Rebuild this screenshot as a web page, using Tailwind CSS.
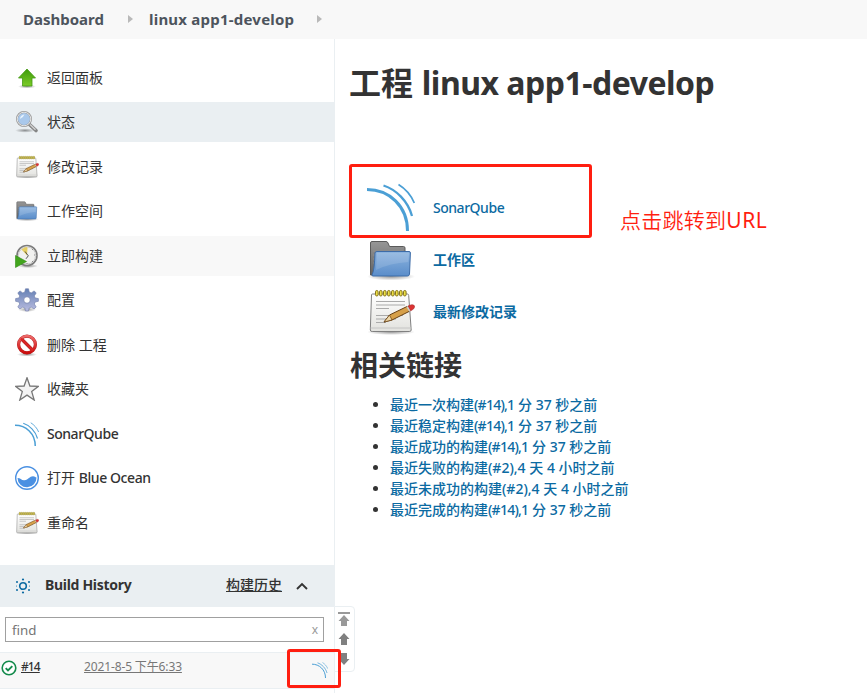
<!DOCTYPE html>
<html lang="zh-CN">
<head>
<meta charset="utf-8">
<title>linux app1-develop [Jenkins]</title>
<script src="https://cdn.jsdelivr.net/npm/@tailwindcss/browser@4"></script>
</head>
<body class="relative h-[693px] w-[867px] overflow-hidden bg-white font-['Noto_Sans','Noto_Sans_CJK_SC',sans-serif] text-sm text-[#333]">
<svg class="absolute size-0" aria-hidden="true">
  <defs>
    <linearGradient id="blue" x1="0" y1="0" x2="0" y2="1"><stop offset="0" stop-color="#8db4df"/><stop offset="1" stop-color="#5a8dca"/></linearGradient>
    <linearGradient id="gray" x1="0" y1="0" x2="0" y2="1"><stop offset="0" stop-color="#969696"/><stop offset="1" stop-color="#626262"/></linearGradient>
    <linearGradient id="paper" x1="0" y1="0" x2="0" y2="1"><stop offset="0" stop-color="#fff"/><stop offset="1" stop-color="#e2e2de"/></linearGradient>
    <linearGradient id="green" x1="0" y1="0" x2="0" y2="1"><stop offset="0" stop-color="#3c9a0a"/><stop offset="1" stop-color="#7ccb28"/></linearGradient>
    <linearGradient id="red" x1="0" y1="0" x2="0" y2="1"><stop offset="0" stop-color="#ee6a6a"/><stop offset="1" stop-color="#cc0c0c"/></linearGradient>
    <linearGradient id="gearfill" x1="0" y1="0" x2="0" y2="1"><stop offset="0" stop-color="#6480b4"/><stop offset="1" stop-color="#babce0"/></linearGradient>
    <radialGradient id="shade"><stop offset="0" stop-color="#000" stop-opacity=".4"/><stop offset="1" stop-color="#000" stop-opacity="0"/></radialGradient>
    <symbol id="sonar" viewBox="0 0 48 48">
      <g fill="none" stroke="#4b9fd5"><path d="M0 6.500C22 6.500 40.500 23 40.500 48" stroke-width="3"/><path d="M16.500 2.500C29 6.500 41 18 45 33" stroke-width="2.300"/><path d="M31.500 1.500C38 5.500 44 12 47.300 20" stroke-width="1.700"/></g>
    </symbol>
    <symbol id="folder" viewBox="0 0 48 48">
      <ellipse cx="24" cy="40.500" rx="24" ry="4" fill="url(#shade)"/>
      <path d="M3.500 39V7q0-1.500 1.500-1.500h14q1.500 0 2 1.500l1.500 3.500h14q1.500 0 1.500 1.500V39z" fill="url(#gray)" stroke="#5a5a5a"/>
      <path d="M6 15h30M6 19h30M6 23h30M6 27h30" stroke="#999" stroke-width=".6"/>
      <path d="M10 15.500h32q1.500 0 1.400 1.500L42.500 38q-.2 2-2 2H6q-1.500 0-.8-1.500Q7.500 34 8 17q0-1.500 2-1.500z" fill="url(#blue)" stroke="#3d6ca8"/>
      <path d="M10 17h32l-.7 9Q23 27 9 34z" fill="#fff" opacity=".13"/>
    </symbol>
    <symbol id="notepad" viewBox="0 0 48 48">
      <ellipse cx="24" cy="44" rx="24" ry="3" fill="url(#shade)"/>
      <path d="M5.500 6h35q1 0 1.200 1.500l2.500 34.500q0 1.500-2 1.500h-37q-2 0-1.900-1.500L4.500 7q0-1 1-1z" fill="url(#paper)" stroke="#808080"/>
      <path d="M3.500 40h41" stroke="#c4c4c4"/>
      <g stroke="#aaa" stroke-width="1.200"><path d="M9 13.500h29M9 17h29M9 20.500h13M9 27.500h27M9 31h20M9 34.500h10"/></g>
      <g fill="#eddf45" stroke="#85751d" stroke-width="1"><rect x="8.500" y="2.500" width="2.600" height="5.500" rx="1.300"/><rect x="12.500" y="2.500" width="2.600" height="5.500" rx="1.300"/><rect x="16.500" y="2.500" width="2.600" height="5.500" rx="1.300"/><rect x="20.500" y="2.500" width="2.600" height="5.500" rx="1.300"/><rect x="24.500" y="2.500" width="2.600" height="5.500" rx="1.300"/><rect x="28.500" y="2.500" width="2.600" height="5.500" rx="1.300"/><rect x="32.500" y="2.500" width="2.600" height="5.500" rx="1.300"/><rect x="36.500" y="2.500" width="2.600" height="5.500" rx="1.300"/></g>
      <path d="M17 34l5.500-7L40 18.500q2-.5 3 1.500t-1 3.500L25 32z" fill="#d6a04a" stroke="#674014"/>
      <path d="M17 34l5.500-7 2.500 5z" fill="#eed7a7" stroke="#674014" stroke-width=".7"/>
      <path d="M41 18l1.500-.7q3-1.300 4.500 0t-.5 3.700L43.500 23z" fill="#dc3333" stroke="#a63030" stroke-width=".6"/>
      <path d="M40 18.500l2.800 4.700" stroke="#ccc" stroke-width="1.500"/>
    </symbol>
  </defs>
</svg>

<header class="flex h-[39px] items-center bg-[#f8f8f8] pb-px text-[15px] leading-5 font-bold text-[#4d545d]">
  <a class="w-[104px] pl-[23px] whitespace-nowrap">Dashboard</a>
  <svg class="mr-[16px] ml-[24px] h-[8px] w-[5px]" viewBox="0 0 5 8"><path d="M0 0l5 4-5 4z" fill="#b9b9b9"/></svg>
  <a class="w-[146px] tracking-[0.22px] whitespace-nowrap">linux app1-develop</a>
  <svg class="ml-[22px] h-[8px] w-[5px]" viewBox="0 0 5 8"><path d="M0 0l5 4-5 4z" fill="#b9b9b9"/></svg>
</header>

<div class="flex h-[654px]">
  <aside class="w-[335px] shrink-0 border-r border-[#eaeff2]">
    <nav class="flex h-[526px] flex-col gap-[4.5px] pt-[18.5px] leading-5">
      <a class="flex h-10 shrink-0 items-center gap-2 pl-[15px]">
        <svg class="size-6" viewBox="0 0 24 24"><ellipse cx="12" cy="20.500" rx="9" ry="2" fill="url(#shade)"/><path d="M12 3l8.500 9H17v8H7.500v-8H3.500z" fill="url(#green)" stroke="#459b14" stroke-width=".8"/></svg>
        <span>返回面板</span>
      </a>
      <a class="flex h-10 shrink-0 items-center gap-2 bg-[#eaeff2] pl-[15px]">
        <svg class="size-6" viewBox="0 0 24 24"><ellipse cx="10" cy="20.500" rx="10" ry="2.200" fill="url(#shade)"/><path d="M14.500 14.500l6.500 6" stroke="#858585" stroke-width="3.600" stroke-linecap="round"/><path d="M15 14.500l5.500 5.200" stroke="#d0d0d0" stroke-width="1.500"/><circle cx="9" cy="9" r="7" fill="#a9c8eb" stroke="#979797" stroke-width="2"/><circle cx="9" cy="9" r="6.800" fill="none" stroke="#eee" stroke-width=".9"/><path d="M5 9q0-4 4.500-4.500Q8 8 5 9z" fill="#e6f1fc"/></svg>
        <span>状态</span>
      </a>
      <a class="flex h-10 shrink-0 items-center gap-2 pl-[15px]"><svg class="size-6"><use href="#notepad"/></svg><span>修改记录</span></a>
      <a class="flex h-10 shrink-0 items-center gap-2 pl-[15px]"><svg class="size-6"><use href="#folder"/></svg><span>工作空间</span></a>
      <a class="flex h-10 shrink-0 items-center gap-2 bg-[#f8f8f8] pl-[15px]">
        <svg class="size-6" viewBox="0 0 24 24"><ellipse cx="13" cy="22" rx="10" ry="2" fill="url(#shade)"/><circle cx="12" cy="11.500" r="10" fill="#f1f1ef" stroke="#7c7c7c" stroke-width="1.600"/><circle cx="12" cy="11.500" r="8.600" fill="none" stroke="#c9c9c9"/><path d="M12 11.500L6.500 5.500q5-3.500 6-2z" fill="#e6cf62"/><path d="M10 7.500l3.300 4.300-2.300 3" fill="none" stroke="#444" stroke-width=".9"/><path d="M17 5l1 1M19 11h1M17 17l1 1M12 19v1" stroke="#888"/><path d="M.5 11.500l11 6-11 6z" fill="#42a51d" stroke="#2f8b12" stroke-width=".6"/></svg>
        <span>立即构建</span>
      </a>
      <a class="flex h-10 shrink-0 items-center gap-2 pl-[15px]">
        <svg class="size-6" viewBox="0 0 24 24"><ellipse cx="12" cy="21.500" rx="9" ry="2.500" fill="url(#shade)"/><path d="M10.500.8h3l.7 3.200 2 .9 3-2 2 2.100-1.900 2.900.8 2 3.300.7v2.700l-3.300.7-.8 2 1.900 2.900-2.100 2.100-2.900-1.900-2 .9-.7 3h-3l-.7-3-2-.9-3 1.900-2-2.100 1.900-2.900-.8-2-3.300-.7v-2.700l3.300-.7.8-2-1.900-2.900 2.100-2.100 2.900 2 2-.9z" fill="url(#gearfill)" stroke="#6c7aa8" stroke-width=".6"/><circle cx="12" cy="12" r="3.300" fill="#fff" stroke="#7480ac" stroke-width=".8"/></svg>
        <span>配置</span>
      </a>
      <a class="flex h-10 shrink-0 items-center gap-2 pl-[15px]">
        <svg class="size-6" viewBox="0 0 24 24"><ellipse cx="12" cy="21.500" rx="10" ry="2" fill="url(#shade)"/><circle cx="12" cy="11.500" r="8.400" fill="#fff" stroke="#b32323" stroke-width="3.200"/><path d="M6.500 6l11 11" stroke="#b32323" stroke-width="3.200"/><circle cx="12" cy="11.500" r="8.400" fill="none" stroke="url(#red)" stroke-width="2.500"/><path d="M6 5.500l12 12" stroke="#d92525" stroke-width="2.300"/></svg>
        <span>删除 工程</span>
      </a>
      <a class="flex h-10 shrink-0 items-center gap-2 pl-[15px]">
        <svg class="size-6" viewBox="0 0 24 24"><path d="M12 .8l2.900 8.200 8.500.3-6.700 5.300 2.500 8.400-7.200-4.900L4.800 23l2.500-8.400L.6 9.300 9.100 9z" fill="#f3f3f3" stroke="#777" stroke-width="1.300"/></svg>
        <span>收藏夹</span>
      </a>
      <a class="flex h-10 shrink-0 items-center gap-2 pl-[15px]"><svg class="size-6"><use href="#sonar"/></svg><span class="font-medium tracking-[-0.47px]">SonarQube</span></a>
      <a class="flex h-10 shrink-0 items-center gap-2 pl-[15px]">
        <svg class="size-6" viewBox="0 0 24 24"><circle cx="12" cy="12" r="11.300" fill="#fff" stroke="#4a90e2" stroke-width="1.400"/><path d="M2.500 12c3 0 4 2.500 7 2.200 4-.4 5-4 8.500-4 1.600 0 2.300.8 3.500 1.300a9.500 9.500 0 0 1-19 .5z" fill="#4a90e2"/></svg>
        <span>打开 <span class="font-medium tracking-[-0.4px]">Blue Ocean</span></span>
      </a>
      <a class="flex h-10 shrink-0 items-center gap-2 pl-[15px]"><svg class="size-6"><use href="#notepad"/></svg><span>重命名</span></a>
    </nav>

    <section>
      <div class="flex h-[42px] items-center bg-[#eaeff2] pl-[15px] font-semibold">
        <svg class="h-4 w-4" viewBox="0 0 16 16"><circle cx="8" cy="8" r="3.300" fill="none" stroke="#0b6aa2" stroke-width="1.600"/><g fill="#0b6aa2"><circle cx="8" cy="1.500" r="1.100"/><circle cx="8" cy="14.500" r="1.100"/><circle cx="2" cy="4" r="1"/><circle cx="14" cy="4" r="1"/><circle cx="2" cy="12" r="1"/><circle cx="14" cy="12" r="1"/><circle cx="1.500" cy="8" r=".5"/><circle cx="14.500" cy="8" r=".5"/></g></svg>
        <span class="ml-[14px] w-[181px] pb-[2px] font-bold tracking-[-0.3px]">Build History</span>
        <a class="pb-[2px] font-medium underline">构建历史</a>
        <svg class="ml-[14px] h-[8px] w-[12px]" viewBox="0 0 12 8"><path d="M1 7l5-5 5 5" fill="none" stroke="#333" stroke-width="1.900"/></svg>
      </div>
      <div class="px-[5px] pt-[10px] pb-[10px]">
        <div class="flex h-[25px] w-[319px] items-center justify-between border border-[#a0a0a0] pr-[5px] pl-[6px] text-[#757575]"><span class="pt-px text-[13.300px]">find</span><span class="text-[12px] text-[#999]">x</span></div>
      </div>
      <div class="flex h-[37px] items-center border-y border-[#eaeff2] bg-[#f8f8f8] pb-[7px] text-[12px]">
        <svg class="mt-[2px] ml-px size-4" viewBox="0 0 16 16"><circle cx="8" cy="8" r="6.800" fill="#fff" stroke="#138a4b" stroke-width="1.600"/><path d="M4.700 8.200l2.300 2.300 4.300-4.300" fill="none" stroke="#138a4b" stroke-width="1.900"/></svg>
        <a class="ml-1 w-[63px]"><span class="font-medium tracking-[-0.9px] underline">#14</span></a>
        <a class="w-[100px] tracking-[-0.13px] whitespace-nowrap text-[#777] underline">2021-8-5 下午6:33</a>
        <svg class="mt-[5px] ml-[128px] size-4"><use href="#sonar"/></svg>
      </div>
    </section>
  </aside>

  <main class="pl-[15px]">
    <h1 class="mt-[22px] h-11 text-[32px] leading-[44px] font-bold tracking-[-0.5px] whitespace-nowrap"><span class="-ml-px tracking-normal">工程</span><span class="pl-px"> linux app1-develop</span></h1>
    <div class="mt-[77px] grid auto-rows-[52px] grid-cols-[66px_auto] items-center pl-[17px] font-semibold text-[#0b6aa2]">
      <svg class="-mt-[2px] size-12"><use href="#sonar"/></svg><a class="font-medium tracking-[-0.47px]">SonarQube</a>
      <svg class="-mt-px size-12"><use href="#folder"/></svg><a>工作区</a>
      <svg class="size-12"><use href="#notepad"/></svg><a>最新修改记录</a>
    </div>
    <h2 class="mt-[4px] h-[46px] text-[28px] leading-[46px] font-bold">相关链接</h2>
    <ul class="mt-[6px] list-disc pl-10 leading-[21px] whitespace-nowrap marker:text-[#333]">
      <li><a class="font-medium text-[#0b6aa2]">最近一次构建<span class="tracking-[-0.75px]">(#14),1</span> 分 37 秒之前</a></li>
      <li><a class="font-medium text-[#0b6aa2]">最近稳定构建<span class="tracking-[-0.75px]">(#14),1</span> 分 37 秒之前</a></li>
      <li><a class="font-medium text-[#0b6aa2]">最近成功的构建<span class="tracking-[-0.75px]">(#14),1</span> 分 37 秒之前</a></li>
      <li><a class="font-medium text-[#0b6aa2]">最近失败的构建(#2),4 天 4 小时之前</a></li>
      <li><a class="font-medium text-[#0b6aa2]">最近未成功的构建(#2),4 天 4 小时之前</a></li>
      <li><a class="font-medium text-[#0b6aa2]">最近完成的构建<span class="tracking-[-0.75px]">(#14),1</span> 分 37 秒之前</a></li>
    </ul>
  </main>
</div>

<div class="absolute top-[606px] left-[334px] flex h-[66px] w-[21px] flex-col items-center gap-[8px] rounded-r border border-[#eaeff2] bg-white pt-[5px] pr-[2px]">
  <svg class="h-[14px] w-[12px] shrink-0" viewBox="0 0 12 14"><path d="M0 0h12v2H0zM6 3l5.500 6H9v5H3V9H.5z" fill="#999"/></svg>
  <svg class="-mt-px h-[12px] w-[12px] shrink-0" viewBox="0 0 12 12"><path d="M6 0l5.500 6H9v6H3V6H.5z" fill="#808080"/></svg>
  <svg class="h-[12px] w-[12px] shrink-0" viewBox="0 0 12 12"><path d="M6 12l5.500-6H9V0H3v6H.5z" fill="#808080"/></svg>
</div>
<div class="absolute top-[164px] left-[349px] h-[74px] w-[243px] rounded-[3px] border-3 border-[#ff1e10]"></div>
<div class="absolute top-[649px] left-[287px] h-[39px] w-[54px] rounded-[3px] border-3 border-[#ff1e10]"></div>
<p class="absolute top-[205px] left-[620px] text-[21px] leading-[30px] font-[350] tracking-[0.25px] whitespace-nowrap text-[#ff1e10]">点击跳转到<span class="font-normal tracking-[0.6px]">URL</span></p>
</body>
</html>
